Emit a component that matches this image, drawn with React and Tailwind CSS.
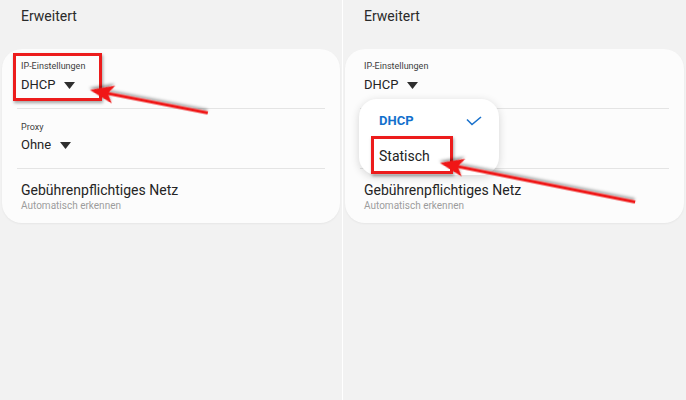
const ARROWS = [
  { tipX: 90, tipY: 90, len: 120, angle: 191.03 },
  { tipX: 440, tipY: 163, len: 199, angle: 191.31 },
]

function Caret() {
  return (
    <svg width="11" height="7" viewBox="0 0 11 7" className="ml-[9px] mt-[1px]">
      <path d="M0 0h11L5.5 7z" fill="#2e2e2e" />
    </svg>
  )
}

function Panel({ withMenu }) {
  return (
    <div className="flex flex-col">
      <div className="h-[49px] pl-[21px] pt-[6px] text-[14px] text-[#2a2a2a]">Erweitert</div>
      <div className="mx-[2px] rounded-[20px] bg-[#fcfcfc] shadow-[0_1px_2px_rgba(0,0,0,0.05)]">
        <div className="h-[59px] pl-[19px] pt-[10px]">
          <div className="text-[9px] leading-[14px] text-[#3c3c3c]">IP-Einstellungen</div>
          <div className="mt-[3px] flex items-center text-[13px] leading-[18px] text-[#242424]">
            DHCP
            <Caret />
          </div>
        </div>
        <div className="mx-[15px] h-px bg-[#e4e4e4]" />
        {/* the open menu covers this row */}
        <div className={`h-[59px] pl-[19px] pt-[11px] ${withMenu ? 'invisible' : ''}`}>
          <div className="text-[9px] leading-[14px] text-[#3c3c3c]">Proxy</div>
          <div className="mt-[2px] flex items-center text-[13px] leading-[18px] text-[#242424]">
            Ohne
            <Caret />
          </div>
        </div>
        <div className="mx-[15px] h-px bg-[#e4e4e4]" />
        <div className="h-[54px] pl-[19px] pt-[12px]">
          <div className="text-[14px] leading-[18px] text-[#242424]">Gebührenpflichtiges Netz</div>
          <div className="text-[10px] leading-[13px] text-[#9c9c9c]">Automatisch erkennen</div>
        </div>
      </div>
      {withMenu && (
        <div className="absolute left-[16px] top-[99px] flex h-[76px] w-[140px] flex-col rounded-[18px] bg-white shadow-[0_2px_8px_rgba(0,0,0,0.16)]">
          <div className="flex items-center justify-between pl-[20px] pr-[17px] pt-[12px]">
            <span className="text-[13px] font-bold text-[#1370cc]">DHCP</span>
            <svg width="16" height="10" viewBox="0 0 16 10">
              <path d="M1 3.5l5 5L15 1" fill="none" stroke="#1a72cc" strokeWidth="1.6" />
            </svg>
          </div>
          <div className="pl-[20px] pt-[15px] text-[14px] leading-[20px] text-[#222]">Statisch</div>
        </div>
      )}
    </div>
  )
}

export default function App() {
  return (
    <div className="relative h-[400px] w-[686px] overflow-hidden bg-[#f2f2f2] font-['Roboto',sans-serif]">
      <div className="flex h-full">
        <div className="w-[342px]">
          <Panel />
        </div>
        <div className="w-[1px] bg-white" />
        <div className="relative flex-1">
          <Panel withMenu />
        </div>
      </div>

      {/* annotation boxes */}
      <div className="absolute left-[13px] top-[53px] h-[48px] w-[89px] border-[3px] border-[#ec1c1c] shadow-[1px_2px_3px_rgba(0,0,0,0.35)]" />
      <div className="absolute left-[371px] top-[136px] h-[38px] w-[82px] border-[3px] border-[#ec1c1c] shadow-[1px_2px_3px_rgba(0,0,0,0.35)]" />

      <svg className="pointer-events-none absolute left-0 top-0" width="686" height="400">
        <defs>
          <filter id="arrowShadow" x="-20%" y="-50%" width="140%" height="200%">
            <feDropShadow dx="1" dy="2" stdDeviation="1.5" floodColor="#000" floodOpacity="0.4" />
          </filter>
        </defs>
        {ARROWS.map((a) => (
          <g key={a.tipX} transform={`translate(${a.tipX} ${a.tipY}) rotate(${a.angle})`} filter="url(#arrowShadow)">
            <line x1="-16" y1="0" x2={-a.len} y2="0" stroke="#f01414" strokeWidth="3" />
            <polygon points="0,0 -24,-9 -18,0 -24,9" fill="#f01414" />
          </g>
        ))}
      </svg>
    </div>
  )
}
